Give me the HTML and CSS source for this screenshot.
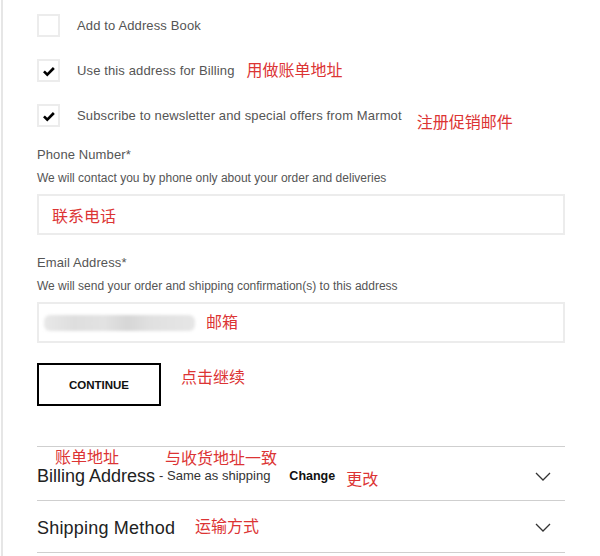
FILE: index.html
```html
<!DOCTYPE html>
<html lang="en">
<head>
  <meta charset="UTF-8">
  <meta name="viewport" content="width=device-width, initial-scale=1.0">
  <title>Checkout</title>
  <link rel="stylesheet" href="styles.css">
</head>
<body>
  <div class="page">
    <div class="checks">
      <label class="check-row">
        <span class="box"></span>
        <span class="check-label">Add to Address Book</span>
      </label>
      <label class="check-row">
        <span class="box">
          <svg width="23" height="23" viewBox="0 0 23 23"><path d="M6 12.5 L10 16.5 L18 8.5" fill="none" stroke="#000" stroke-width="3.2"/></svg>
        </span>
        <span class="check-label">Use this address for Billing</span>
        <span class="note note-billing">用做账单地址</span>
      </label>
      <label class="check-row">
        <span class="box">
          <svg width="23" height="23" viewBox="0 0 23 23"><path d="M6 12.5 L10 16.5 L18 8.5" fill="none" stroke="#000" stroke-width="3.2"/></svg>
        </span>
        <span class="check-label">Subscribe to newsletter and special offers from Marmot</span>
        <span class="note note-news">注册促销邮件</span>
      </label>
    </div>

    <div class="field">
      <div class="field-label">Phone Number*</div>
      <div class="field-help">We will contact you by phone only about your order and deliveries</div>
      <div class="input">
        <span class="note">联系电话</span>
      </div>
    </div>

    <div class="field">
      <div class="field-label">Email Address*</div>
      <div class="field-help">We will send your order and shipping confirmation(s) to this address</div>
      <div class="input input-email">
        <span class="blurred"></span>
        <span class="note note-email">邮箱</span>
      </div>
    </div>

    <div class="actions">
      <button class="continue">CONTINUE</button>
      <span class="note note-continue">点击继续</span>
    </div>

    <div class="steps">
      <div class="step step-billing">
        <span class="note note-step1">账单地址</span>
        <span class="note note-step2">与收货地址一致</span>
        <span class="step-title">Billing Address</span>
        <span class="step-sub">- Same as shipping</span>
        <span class="step-change">Change</span>
        <span class="note note-change">更改</span>
        <svg class="chevron" width="16" height="9" viewBox="0 0 16 9"><polyline points="1,1 8,8 15,1" fill="none" stroke="#333" stroke-width="1.3"/></svg>
      </div>
      <div class="step step-shipping">
        <span class="step-title step-title-ship">Shipping Method</span>
        <span class="note note-ship">运输方式</span>
        <svg class="chevron" width="16" height="9" viewBox="0 0 16 9"><polyline points="1,1 8,8 15,1" fill="none" stroke="#333" stroke-width="1.3"/></svg>
      </div>
    </div>
  </div>
</body>
</html>
```

FILE: styles.css
```css
* {
  margin: 0;
  padding: 0;
  box-sizing: border-box;
}
body {
  font-family: "Liberation Sans", Arial, sans-serif;
  background: #fff;
  color: #555;
}
.page {
  margin-left: 1px;
  border-left: 2px solid #e6e6e6;
  min-height: 556px;
  padding: 14px 0 0 34px;
  width: 565px;
}
.note {
  font-family: "Noto Sans CJK SC", sans-serif;
  font-size: 16px;
  line-height: 16px;
  color: #dc3434;
  white-space: nowrap;
}
.checks {
  display: flex;
  flex-direction: column;
  gap: 22px;
}
.check-row {
  display: flex;
  align-items: center;
  height: 23px;
}
.box {
  width: 23px;
  height: 23px;
  border: 2px solid #ececec;
  display: flex;
  align-items: center;
  justify-content: center;
  flex-shrink: 0;
}
.box svg {
  display: block;
}
.check-label {
  margin-left: 17px;
  font-size: 13px;
  letter-spacing: 0.13px;
  color: #555;
}
.note-billing {
  margin-left: 12px;
  position: relative;
  top: -2px;
}
.note-news {
  margin-left: 15px;
  position: relative;
  top: 5px;
}
.field {
  margin-top: 20px;
}
.field-label {
  font-size: 13px;
  line-height: 16px;
  letter-spacing: 0.1px;
  color: #555;
  margin-bottom: 8px;
}
.field-help {
  font-size: 12px;
  line-height: 14px;
  color: #555;
  margin-bottom: 9px;
}
.input {
  width: 528px;
  height: 41px;
  border: 2px solid #ececec;
  display: flex;
  align-items: center;
  padding-left: 13px;
}
.input-email {
  padding-left: 5px;
}
.blurred {
  width: 151px;
  height: 16px;
  margin-right: 11px;
  border-radius: 6px;
  background: linear-gradient(90deg, #e8e8e8 0%, #dedede 20%, #e2e2e2 40%, #d6d6d6 55%, #e0e0e0 70%, #e6e6e6 100%);
  filter: blur(1.5px);
}
.note-email {
  position: relative;
  top: -2px;
}
.actions {
  margin-top: 20px;
  display: flex;
  align-items: center;
}
.continue {
  width: 124px;
  height: 43px;
  border: 2px solid #000;
  background: #fff;
  font-family: "Liberation Sans", Arial, sans-serif;
  font-weight: bold;
  font-size: 11.5px;
  color: #111;
}
.note-continue {
  margin-left: 20px;
  position: relative;
  top: -9px;
}
.steps {
  margin-top: 40px;
  width: 528px;
  border-top: 1px solid #cfcfcf;
}
.step {
  position: relative;
  display: flex;
  align-items: center;
  border-bottom: 1px solid #cfcfcf;
  color: #222;
}
.step-billing {
  height: 54px;
  padding-top: 5px;
}
.step-shipping {
  height: 52px;
  padding-top: 2px;
}
.step-title {
  font-size: 18px;
  line-height: 16px;
  color: #222;
}
.step-title-ship {
  letter-spacing: 0.2px;
}
.step-sub {
  font-size: 13px;
  line-height: 14px;
  color: #333;
  margin-left: 4px;
}
.step-change {
  font-size: 12.5px;
  line-height: 14px;
  font-weight: bold;
  color: #111;
  margin-left: 19px;
}
.note-change {
  margin-left: 11px;
  position: relative;
  top: 2px;
}
.note-step1 {
  position: absolute;
  left: 18px;
  top: 1px;
}
.note-step2 {
  position: absolute;
  left: 128px;
  top: 2px;
}
.note-ship {
  margin-left: 20px;
  position: relative;
  top: -3px;
}
.chevron {
  margin-left: auto;
  margin-right: 14px;
}
```
